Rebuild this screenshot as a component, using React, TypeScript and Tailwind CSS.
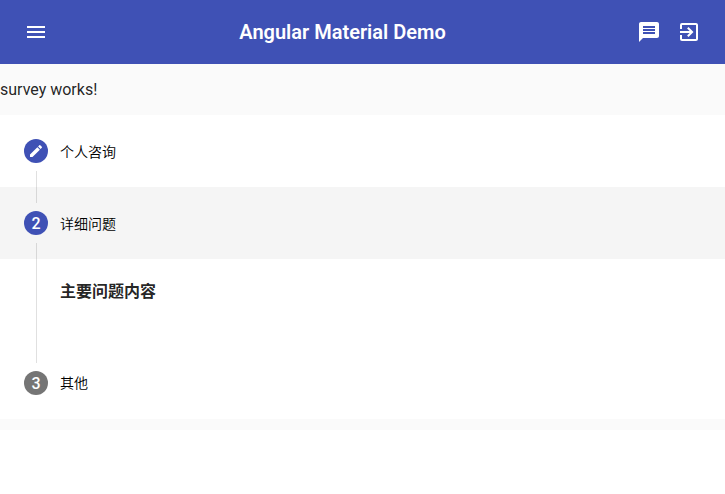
import { MdMenu, MdMessage, MdExitToApp, MdCreate } from "react-icons/md";
import type { ReactNode } from "react";

function StepHeader({ badge, label, active, reached }: { badge: ReactNode; label: string; active?: boolean; reached?: boolean }) {
  return (
    <div className={`flex h-[72px] items-center px-6 ${active ? "bg-black/4" : "bg-white"}`}>
      <div className={`mr-3 flex size-6 items-center justify-center rounded-full text-base leading-6 font-medium text-white ${reached ? "bg-[#3f51b5]" : "bg-[#757575]"}`}>
        {typeof badge === "string" ? <span className="pt-0.5">{badge}</span> : badge}
      </div>
      <span className={`text-sm leading-5 font-[350] text-black ${reached ? "pt-0.5" : ""}`}>{label}</span>
    </div>
  );
}

export default function App() {
  return (
    <div className="h-[494px] bg-white font-['Roboto','Noto_Sans_CJK_SC',sans-serif] text-black/87">
      <div className="h-[430px] bg-[#fafafa]">
        <header className="flex h-16 items-center justify-between bg-[#3f51b5] px-6 text-white">
          <MdMenu size={24} />
          <h1 className="text-xl leading-8 font-semibold">Angular Material Demo</h1>
          <div className="flex gap-4">
            <MdMessage size={24} />
            <MdExitToApp size={24} />
          </div>
        </header>
        <p className="pt-3.5 pb-[13px] text-base leading-6">survey works!</p>
        <main className="h-[304px] bg-white">
          <StepHeader badge={<MdCreate size={16} />} label="个人咨询" reached />
          <div className="relative">
            <div className="absolute -top-4 left-9 h-8 w-px bg-black/12" />
            <StepHeader badge="2" label="详细问题" active reached />
          </div>
          <section className="relative h-[88px] pt-[21px] pl-[60px]">
            <div className="absolute -top-4 left-9 h-[120px] w-px bg-black/12" />
            <h3 className="text-base leading-6 font-bold">主要问题内容</h3>
          </section>
          <StepHeader badge="3" label="其他" />
        </main>
      </div>
    </div>
  );
}
